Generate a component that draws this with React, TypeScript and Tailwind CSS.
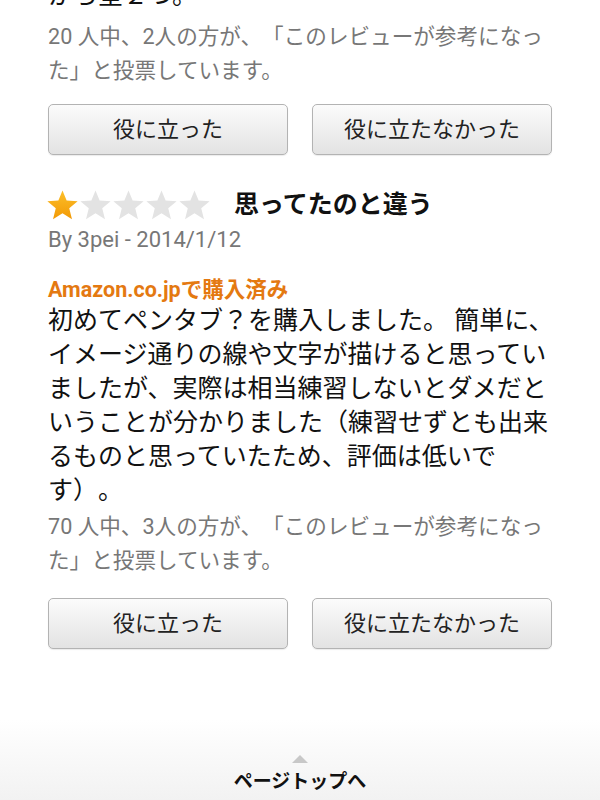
const font = { fontFamily: 'Roboto, "Noto Sans CJK JP", sans-serif' }

function Star({ filled }: { filled: boolean }) {
  return (
    <svg width="33" height="33" viewBox="0 0 24 24">
      <defs>
        <linearGradient id="gold" x1="0" y1="0" x2="0" y2="1">
          <stop offset="0" stopColor="#fcbf2a" />
          <stop offset="1" stopColor="#f29a06" />
        </linearGradient>
      </defs>
      <polygon
        points="12,1 15,8.4 23,8.9 16.9,14 18.9,22 12,17.6 5.1,22 7.1,14 1,8.9 9,8.4"
        fill={filled ? 'url(#gold)' : '#e3e3e3'}
      />
    </svg>
  )
}

function VoteButtons() {
  return (
    <div className="flex justify-between">
      {['役に立った', '役に立たなかった'].map((label) => (
        <button
          key={label}
          className="h-[51px] w-[240px] rounded-[5px] border border-[#b3b3b3] bg-gradient-to-b from-[#fbfbfb] to-[#e3e3e3] text-[22px] text-[#222] shadow-[0_1px_1px_rgba(0,0,0,0.08)]"
        >
          {label}
        </button>
      ))}
    </div>
  )
}

function Helpful({ total, yes }: { total: number; yes: number }) {
  return (
    <p className="whitespace-nowrap text-[21.6px] leading-[34px] text-[#777]">
      <span className="block">{total} 人中、{yes}人の方が、「このレビューが参考になっ</span>
      <span className="block">た」と投票しています。</span>
    </p>
  )
}

const review = [
  '初めてペンタブ？を購入しました。 簡単に、',
  'イメージ通りの線や文字が描けると思ってい',
  'ましたが、実際は相当練習しないとダメだと',
  'いうことが分かりました（練習せずとも出来',
  'るものと思っていたため、評価は低いで',
  'す）。',
]

export default function App() {
  return (
    <div
      className="relative h-[800px] w-[600px] overflow-hidden bg-white [text-spacing-trim:space-all]"
      style={font}
    >
      <div className="px-12">
        <p className="-mt-[22px] text-[25px] leading-[36px] text-[#111]">から星２つ。</p>
        <div className="mt-[6px]">
          <Helpful total={20} yes={2} />
        </div>
        <div className="mt-[16px]">
          <VoteButtons />
        </div>

        <div className="mt-[32px] flex h-[36px] items-center">
          <div className="-ml-[2px] flex">
            <Star filled />
            <Star filled={false} />
            <Star filled={false} />
            <Star filled={false} />
            <Star filled={false} />
          </div>
          <h3 className="ml-[23px] text-[25px] font-bold text-[#111]">思ってたのと違う</h3>
        </div>
        <p className="mt-[2px] text-[22px] leading-[30px] text-[#777]">By 3pei - 2014/1/12</p>
        <p className="mt-[21px] text-[21.5px] font-bold leading-[28px] text-[#e47911]">
          Amazon.co.jpで購入済み
        </p>
        <p className="whitespace-nowrap text-[25px] leading-[34px] text-[#111]">
          {review.map((line) => (
            <span key={line} className="block">
              {line}
            </span>
          ))}
        </p>
        <div className="mt-[2px]">
          <Helpful total={70} yes={3} />
        </div>
        <div className="mt-[20px]">
          <VoteButtons />
        </div>
      </div>

      <div className="absolute inset-x-0 bottom-0 flex h-[80px] flex-col items-center bg-gradient-to-b from-white to-[#f2f2f2] pt-[35px]">
        <div className="h-0 w-0 border-x-[8px] border-b-[8px] border-x-transparent border-b-[#c8c8c8]" />
        <div className="mt-[5px] text-[19px] font-bold leading-[28px] text-[#111]">ページトップへ</div>
      </div>
    </div>
  )
}
